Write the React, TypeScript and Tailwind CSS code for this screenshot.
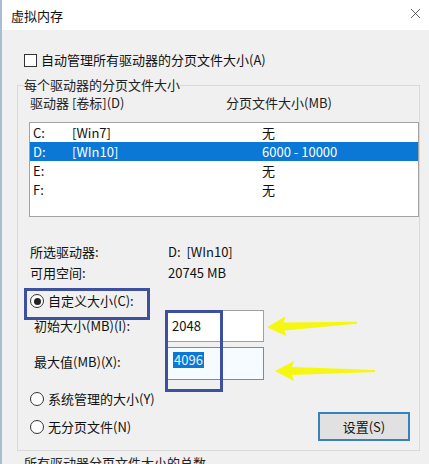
import React from 'react';
import { X } from 'lucide-react';

/* --- DATA --- */
const DRIVES = [
  { letter: 'C:', label: '[Win7]', size: '无' },
  { letter: 'D:', label: '[WIn10]', size: '6000 - 10000', selected: true },
  { letter: 'E:', label: '', size: '无' },
  { letter: 'F:', label: '', size: '无' },
];

function Radio({ checked }: { checked?: boolean }) {
  return (
    <span className="w-[14px] h-[14px] rounded-full border border-[#333] bg-white flex items-center justify-center shrink-0">
      {checked && <span className="w-[7px] h-[7px] rounded-full bg-[#222]" />}
    </span>
  );
}

// hand-drawn yellow marker arrow
function Arrow({ width }: { width: number }) {
  return (
    <svg width={width} height="24" viewBox={`0 0 ${width} 24`}>
      <path
        d={`M0 12 L19 2 L17 8 L${width} 11 L${width} 13 L17 16 L19 22 Z`}
        fill="#f6f600"
        opacity="0.92"
      />
    </svg>
  );
}

export default function App() {
  return (
    <div className="relative w-[429px] h-[464px] overflow-hidden bg-[#f0f0f0] border-l-2 border-[#a9bcd3] text-[13px] text-[#111] font-[Noto_Sans_CJK_SC,sans-serif]">
      {/* title bar */}
      <div className="h-[30px] bg-white flex items-center justify-between pl-[9px] pr-[5px]">
        <span className="leading-[18px] pt-[1px]">虚拟内存</span>
        <X size={17} strokeWidth={1.1} className="text-[#333] -mt-[3px]" />
      </div>

      {/* auto manage */}
      <div className="mt-[21px] ml-[22px] flex items-center gap-[4px] leading-[18px]">
        <span className="w-[13px] h-[13px] border border-[#333] bg-white shrink-0" />
        <span>自动管理所有驱动器的分页文件大小(A)</span>
      </div>

      {/* per-drive groupbox */}
      <fieldset className="mt-[7px] ml-[15px] w-[401px] h-[375px] border border-[#d9d9d9] pl-[6px]">
        <legend className="px-0 leading-[18px] text-[#222]">每个驱动器的分页文件大小</legend>

        <div className="flex leading-[18px] ml-[6px] text-[#222]">
          <span className="w-[196px]">驱动器 [卷标](D)</span>
          <span>分页文件大小(MB)</span>
        </div>

        <div className="mt-[10px] ml-[5px] w-[390px] h-[95px] border border-[#a3a3a3] bg-white">
          {DRIVES.map((d) => (
            <div
              key={d.letter}
              className={
                d.selected
                  ? 'flex h-[19px] items-center pl-[3px] bg-[#0a78d4] text-white'
                  : 'flex h-[19px] items-center pl-[3px]'
              }
            >
              <span className="w-[39px]">{d.letter}</span>
              <span className="w-[190px]">{d.label}</span>
              <span>{d.size}</span>
            </div>
          ))}
        </div>

        <div className="mt-[24px] ml-[6px] grid grid-cols-[138px_1fr] leading-[21px]">
          <span>所选驱动器:</span>
          <span>D:&nbsp; [WIn10]</span>
          <span>可用空间:</span>
          <span>20745 MB</span>
        </div>

        <div className="mt-[8px] ml-[6px] flex items-center gap-[4px] leading-[20px]">
          <Radio checked />
          <span>自定义大小(C):</span>
        </div>

        <div className="mt-[-1px] ml-[10px] flex items-center">
          <span className="w-[133px] leading-[18px]">初始大小(MB)(I):</span>
          <div className="w-[97px] h-[32px] border border-[#a0a0a0] bg-white flex items-center pl-[4px] leading-[18px]">
            2048
          </div>
        </div>

        <div className="mt-[5px] ml-[10px] flex items-center">
          <span className="w-[133px] leading-[18px] -mt-[4px]">最大值(MB)(X):</span>
          <div className="w-[97px] h-[33px] border border-[#6d8fae] bg-[#f6fbff] flex items-start pt-[4px] pl-[5px] leading-[16px]">
            <span className="bg-[#0a78d4] text-[#e8f2ff] px-[1px]">4096</span>
          </div>
        </div>

        <div className="mt-[9px] ml-[6px] flex items-center gap-[4px] leading-[20px]">
          <Radio />
          <span>系统管理的大小(Y)</span>
        </div>

        <div className="mt-[3px] ml-[6px] mr-[9px] flex items-center justify-between">
          <div className="flex items-center gap-[4px] leading-[20px]">
            <Radio />
            <span>无分页文件(N)</span>
          </div>
          <button className="w-[92px] h-[29px] border-2 border-[#3a80b9] bg-[#e1e1e1] leading-[18px]">
            设置(S)
          </button>
        </div>
      </fieldset>

      <div className="mt-[3px] ml-[22px] leading-[18px] text-[#222]">所有驱动器分页文件大小的总数</div>

      {/* annotation overlays */}
      <div className="absolute left-[22px] top-[288px] w-[126px] h-[32px] border-[3px] border-[#3d50a0]" />
      <div className="absolute left-[163px] top-[310px] w-[58px] h-[82px] border-[3px] border-[#3d50a0]" />
      <div className="absolute left-[265px] top-[313px] -rotate-3">
        <Arrow width={90} />
      </div>
      <div className="absolute left-[273px] top-[359px]">
        <Arrow width={100} />
      </div>
    </div>
  );
}
